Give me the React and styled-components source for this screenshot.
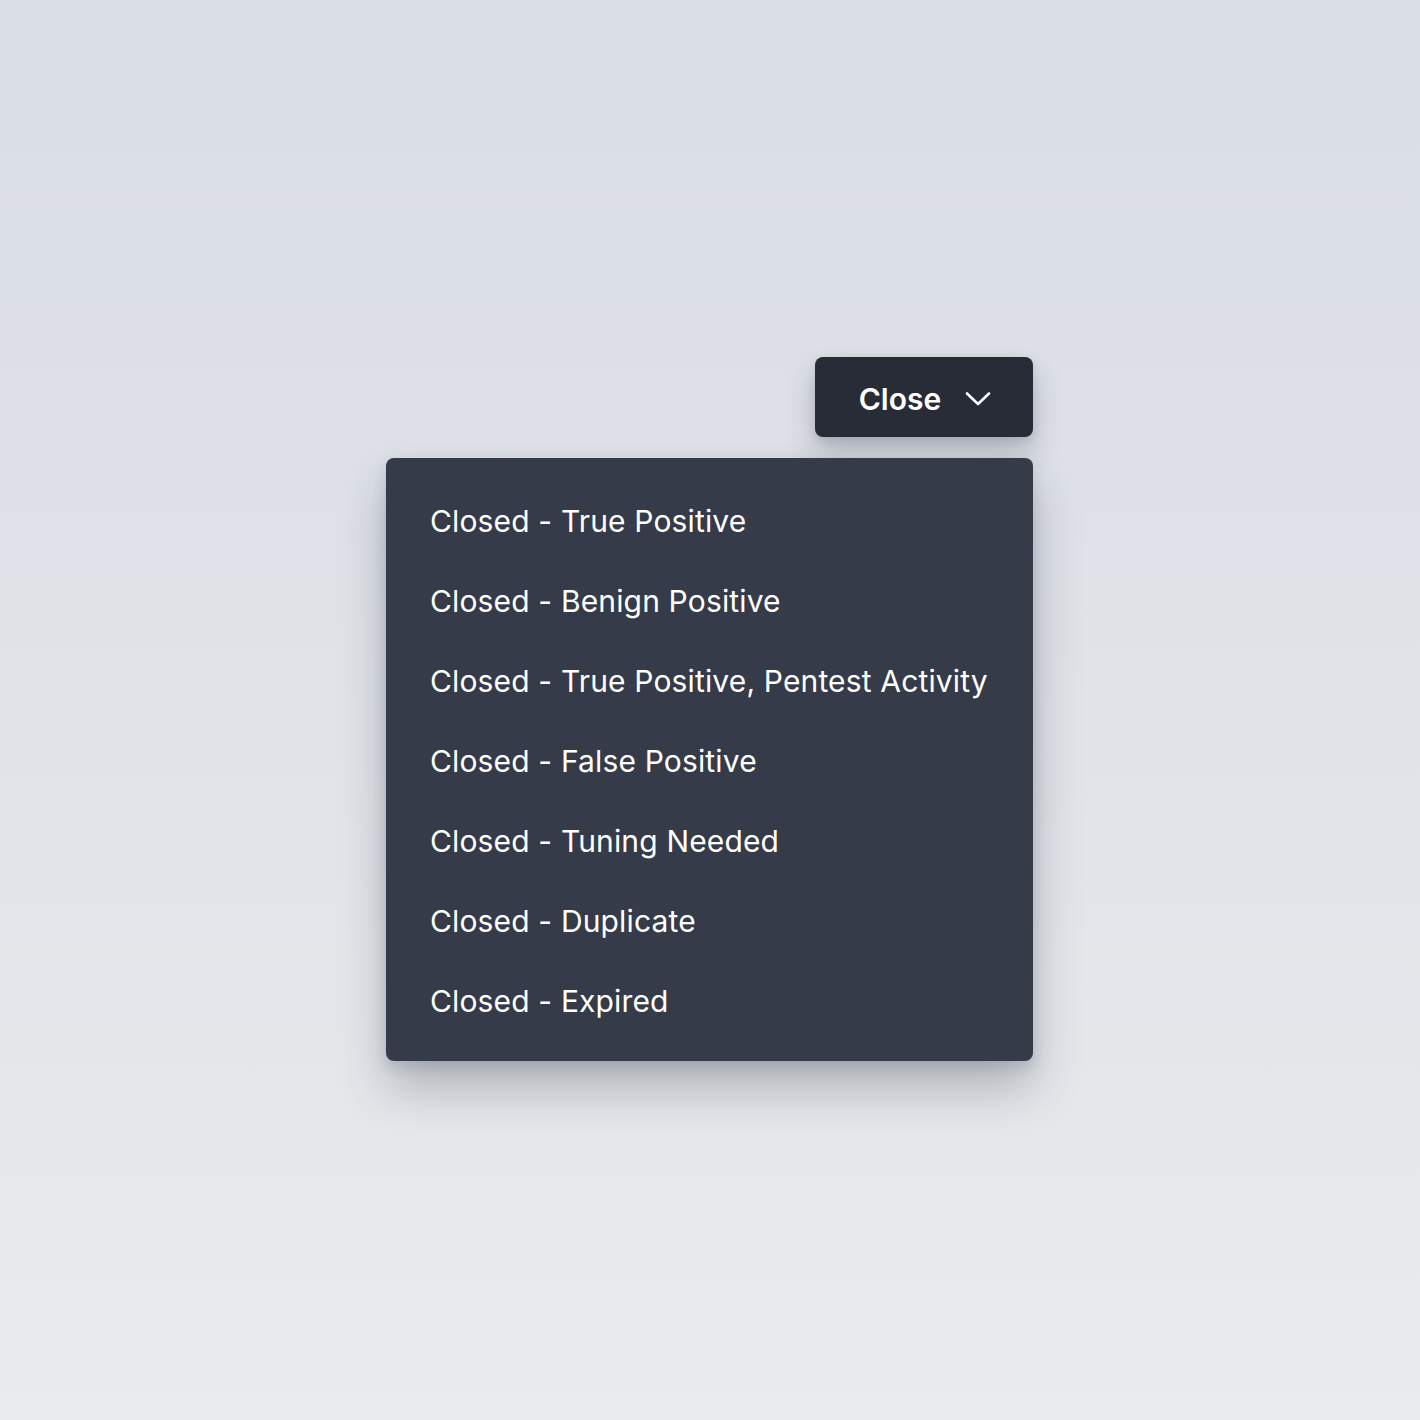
import React from 'react';
import styled, { createGlobalStyle } from 'styled-components';

const GlobalStyle = createGlobalStyle`
  html, body {
    margin: 0;
    padding: 0;
  }
  body {
    font-family: Inter, "Noto Sans", sans-serif;
  }
`;

const Page = styled.div`
  width: 100%;
  min-height: 100vh;
  box-sizing: border-box;
  padding: 0 1px 2px 0;
  display: flex;
  align-items: center;
  justify-content: center;
  background: linear-gradient(180deg, #d9dde5 0%, #e0e3e8 50%, #e9ebed 100%);
`;

const Dropdown = styled.div`
  width: 647px;
  display: flex;
  flex-direction: column;
  align-items: flex-end;
  gap: 21px;
`;

const Trigger = styled.button`
  width: 218px;
  height: 80px;
  display: flex;
  align-items: center;
  justify-content: center;
  gap: 24px;
  padding: 3px 0 0 2px;
  border: none;
  border-radius: 8px;
  background: #282c37;
  color: #fff;
  font-family: Inter, sans-serif;
  font-size: 30px;
  font-weight: 600;
  cursor: pointer;
  box-shadow: 0 16px 30px rgba(40, 48, 64, 0.24), 0 4px 10px rgba(40, 48, 64, 0.12);
`;

const Menu = styled.ul`
  list-style: none;
  margin: 0;
  width: 100%;
  box-sizing: border-box;
  padding: 23px 0 20px;
  border-radius: 8px;
  background: #353b48;
  box-shadow: 0 28px 48px rgba(40, 48, 64, 0.28), 0 6px 14px rgba(40, 48, 64, 0.14);
`;

const Item = styled.li`
  height: 80px;
  display: flex;
  align-items: center;
  padding: 0 44px;
  color: #fff;
  font-family: Inter, sans-serif;
  font-size: 30px;
  font-weight: 400;
  letter-spacing: 0.15px;
  white-space: nowrap;
  cursor: pointer;
`;

const options = [
  'Closed - True Positive',
  'Closed - Benign Positive',
  'Closed - True Positive, Pentest Activity',
  'Closed - False Positive',
  'Closed - Tuning Needed',
  'Closed - Duplicate',
  'Closed - Expired',
];

const Chevron = () => (
  <svg width="26" height="16" viewBox="0 0 26 16" fill="none">
    <path d="M2 2.5 L13 13 L24 2.5" stroke="#fff" strokeWidth="2.6" strokeLinecap="round" strokeLinejoin="round" />
  </svg>
);

const App = () => {
  return (
    <Page>
      <GlobalStyle />
      <Dropdown>
        <Trigger>
          Close
          <Chevron />
        </Trigger>
        <Menu>
          {options.map((o) => (
            <Item key={o}>{o}</Item>
          ))}
        </Menu>
      </Dropdown>
    </Page>
  );
};

export default App;
